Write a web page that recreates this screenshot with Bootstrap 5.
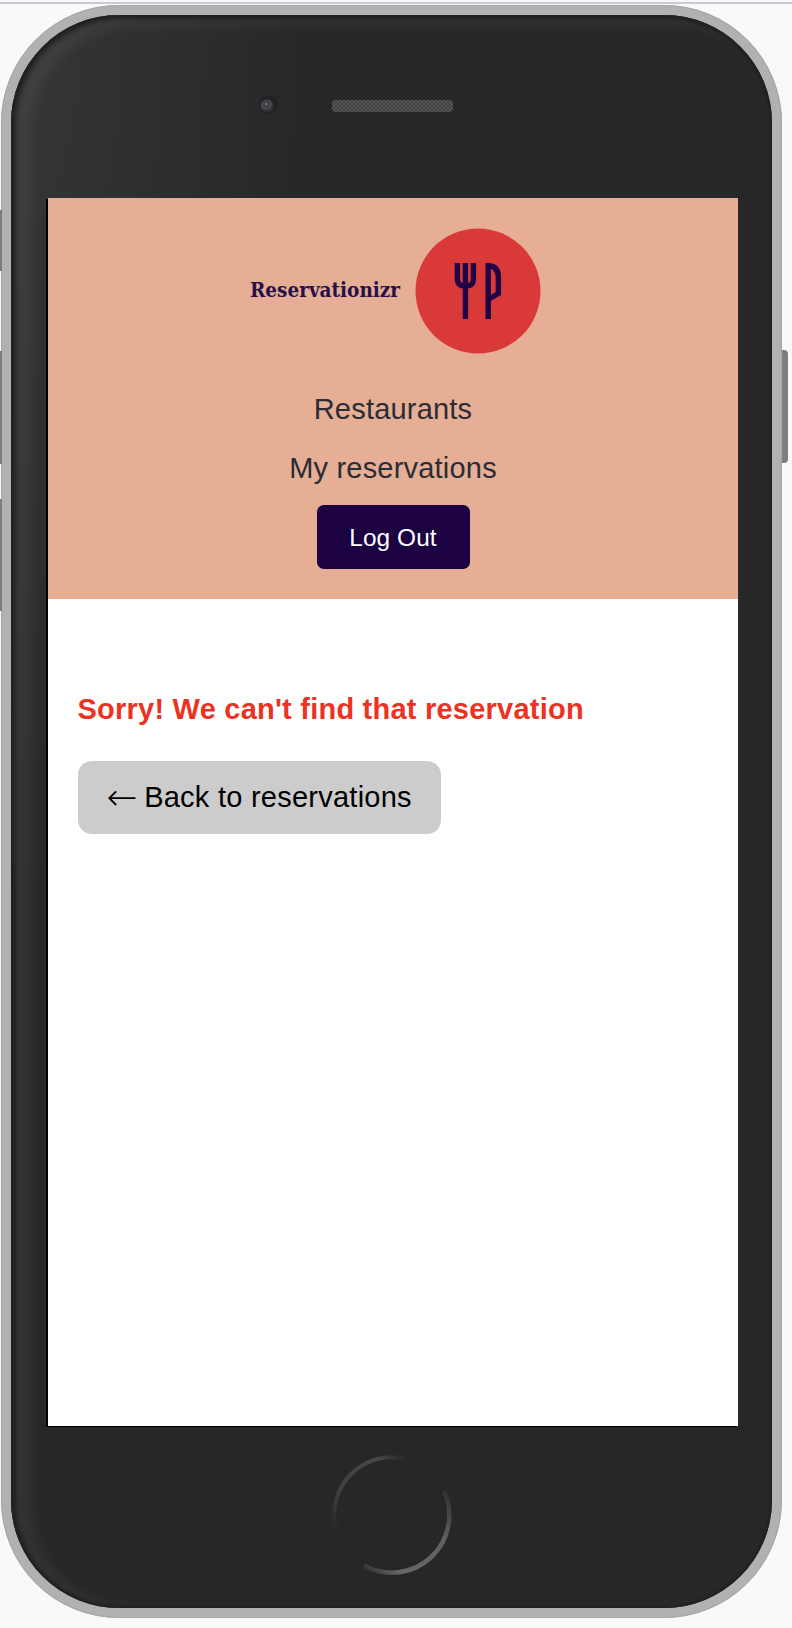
<!DOCTYPE html>
<html lang="en">
<head>
<meta charset="utf-8">
<meta name="viewport" content="width=device-width, initial-scale=1">
<title>Reservationizr</title>
<link href="https://cdn.jsdelivr.net/npm/bootstrap@5.3.0/dist/css/bootstrap.min.css" rel="stylesheet">
<style>
  body { background: #f8faf9; font-family: "Liberation Sans", Arial, sans-serif; height: 1628px; overflow: hidden; }
  .top-rule { height: 4px; border-bottom: 2px solid #c8cbd3; background: #f8f8fb; }
  .phone {
    width: 781px; height: 1613px; margin: 1px 0 0 1px;
    border: 10px solid #b1b1b1; border-radius: 118px;
    outline: 1px solid #a6a6a6; outline-offset: -1px;
    padding: 183px 33px 0 37px;
    background: #272727;
  }
  .phone-face {
    inset: 0; border-radius: 108px;
    background: radial-gradient(ellipse 300px 900px at 0 0, rgba(255,255,255,.07), rgba(255,255,255,0));
    box-shadow: inset 0 0 3px 2px #202020, inset 3px 2px 6px 2px #222, inset 16px 6px 14px 4px rgba(255,255,255,.065), inset 0 0 14px 8px rgba(255,255,255,.02);
  }
  .side-key { left: -11px; width: 2px; background: #7d7d7d; }
  .key-mute { top: 195px; height: 61px; }
  .key-up { top: 336px; height: 113px; }
  .key-down { top: 484px; height: 112px; }
  .key-power { left: auto; right: -16px; width: 6px; top: 335px; height: 113px; background: #7f7f7f; border-radius: 0 4px 4px 0; }
  .sensors { left: 246px; top: 70px; }
  .home-key { left: 310px; top: 1429px; }
  .screen { width: 690px; height: 1228px; background: #fff; box-shadow: -2px 1px 0 #000; }
  .site-header { height: 401px; background: #e6ae94; padding-top: 30px; }
  .site-link { font-size: 29px; line-height: 36px; color: #2b2c34; letter-spacing: .2px; }
  .link-first { margin-top: 36.5px; }
  .link-second { margin-top: 23px; }
  .btn-logout { --bs-btn-color: #fff; --bs-btn-bg: #1c0242; width: 153px; height: 64.5px; margin-top: 19px; border: 0; border-radius: 7px; font-size: 24.4px; letter-spacing: .1px; }
  .site-main { padding: 92px 29.5px 0; }
  .notice { font-size: 29px; line-height: 36px; color: #eb3323; letter-spacing: .23px; }
  .btn-return { --bs-btn-color: #000; --bs-btn-bg: #ccc; width: 363px; height: 73px; margin-top: 34px; border: 0; border-radius: 14px; font-size: 29px; letter-spacing: .25px; white-space: nowrap; }
  .arrow { width: 28px; margin-left: 2px; margin-right: 8px; font-family: "DejaVu Sans", sans-serif; font-weight: 200; font-size: 37px; line-height: 30px; }
</style>
</head>
<body>
<div class="top-rule"></div>
<div class="phone position-relative">
  <div class="phone-face position-absolute"></div>
  <span class="side-key key-mute position-absolute"></span>
  <span class="side-key key-up position-absolute"></span>
  <span class="side-key key-down position-absolute"></span>
  <span class="side-key key-power position-absolute"></span>

  <svg class="sensors position-absolute" width="210" height="40" viewBox="0 0 210 40" aria-hidden="true">
    <defs>
      <pattern id="mesh" width="4" height="4" patternUnits="userSpaceOnUse">
        <rect width="4" height="4" fill="#424242"/><rect width="2" height="2" fill="#555"/><rect x="2" y="2" width="2" height="2" fill="#555"/>
      </pattern>
      <radialGradient id="lens" cx=".45" cy=".35"><stop offset="0" stop-color="#77777c"/><stop offset=".35" stop-color="#38383e"/><stop offset=".75" stop-color="#4b4b51"/><stop offset="1" stop-color="#303035"/></radialGradient>
    </defs>
    <circle cx="11.500" cy="20" r="9.500" fill="#222226"/>
    <circle cx="10" cy="21" r="6.500" fill="url(#lens)"/>
    <rect x="75" y="15" width="121" height="12" rx="4" fill="url(#mesh)"/>
  </svg>

  <div class="screen position-relative">
    <header class="site-header d-flex flex-column align-items-center">
      <svg width="330" height="126" viewBox="228 228 330 126" role="img" aria-label="Reservationizr">
        <text x="250" y="297" font-family="DejaVu Serif Condensed, DejaVu Serif, serif" font-weight="700" font-size="21.300" fill="#27104a" textLength="150" lengthAdjust="spacingAndGlyphs">Reservationizr</text>
        <circle cx="478" cy="291" r="62.500" fill="#d93a39"/>
        <g fill="none" stroke="#1f0344" stroke-width="5.400">
          <path d="M457.400 263v16q0 7 7 7h2q7 0 7-7v-16M465.400 263v56"/>
          <path d="M488.200 319v-53.300q10.200 0 10.200 12.300v15.500l-10.200 6"/>
        </g>
      </svg>
      <a class="site-link link-first text-decoration-none" href="#">Restaurants</a>
      <a class="site-link link-second text-decoration-none" href="#">My reservations</a>
      <button class="btn btn-logout p-0 pt-1" type="button">Log Out</button>
    </header>
    <main class="site-main d-flex flex-column align-items-start">
      <p class="notice fw-bold mb-0">Sorry! We can't find that reservation</p>
      <a class="btn btn-return d-flex align-items-center justify-content-center p-0" href="#"><span class="arrow d-flex justify-content-center">←</span><span>Back to reservations</span></a>
    </main>
  </div>

  <svg class="home-key position-absolute" width="142" height="142" viewBox="-71 -71 142 142" fill="none" aria-hidden="true">
    <defs>
      <linearGradient id="arcLow" gradientUnits="userSpaceOnUse" x1="53" y1="-26" x2="-28" y2="53"><stop offset="0" stop-color="#303030"/><stop offset=".3" stop-color="#606060"/><stop offset=".8" stop-color="#676767"/><stop offset="1" stop-color="#343434"/></linearGradient>
      <linearGradient id="arcHigh" gradientUnits="userSpaceOnUse" x1="-57" y1="14" x2="14" y2="-57"><stop offset="0" stop-color="#282828"/><stop offset=".3" stop-color="#414141"/><stop offset=".8" stop-color="#464646"/><stop offset="1" stop-color="#282828"/></linearGradient>
    </defs>
    <path d="M52-24A57.500 57.500 0 0 1-28 50.500" stroke="url(#arcLow)" stroke-width="4.500"/>
    <path d="M-56 14A57.500 57.500 0 0 1 12-56.500" stroke="url(#arcHigh)" stroke-width="4"/>
  </svg>
</div>
<script src="https://cdn.jsdelivr.net/npm/bootstrap@5.3.0/dist/js/bootstrap.bundle.min.js"></script>
</body>
</html>
